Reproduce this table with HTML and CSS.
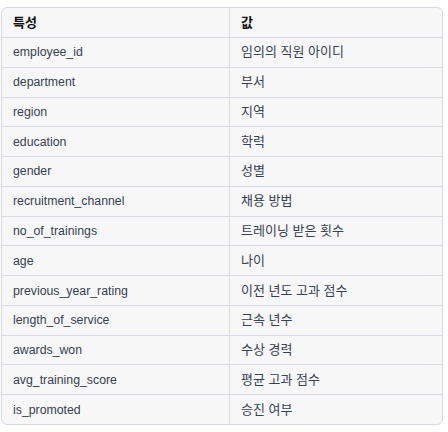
FILE: index.html
```html
<!DOCTYPE html>
<html lang="ko">
<head>
<meta charset="utf-8">
<link rel="stylesheet" href="styles.css">
</head>
<body>
<div class="wrap">
<table class="tbl">
<thead>
<tr><th class="c1">특성</th><th class="c2">값</th></tr>
</thead>
<tbody>
<tr><td>employee_id</td><td>임의의 직원 아이디</td></tr>
<tr><td>department</td><td>부서</td></tr>
<tr><td>region</td><td>지역</td></tr>
<tr><td>education</td><td>학력</td></tr>
<tr><td>gender</td><td>성별</td></tr>
<tr><td>recruitment_channel</td><td>채용 방법</td></tr>
<tr><td>no_of_trainings</td><td>트레이닝 받은 횟수</td></tr>
<tr><td>age</td><td>나이</td></tr>
<tr><td>previous_year_rating</td><td>이전 년도 고과 점수</td></tr>
<tr><td>length_of_service</td><td>근속 년수</td></tr>
<tr><td>awards_won</td><td>수상 경력</td></tr>
<tr><td>avg_training_score</td><td>평균 고과 점수</td></tr>
<tr><td>is_promoted</td><td>승진 여부</td></tr>
</tbody>
</table>
</div>
</body>
</html>
```
FILE: styles.css
```css
html, body {
  margin: 0;
  padding: 0;
  background: #ffffff;
}
.wrap {
  padding: 7px 5px 0 1px;
}
.tbl {
  width: 442px;
  border-collapse: separate;
  border-spacing: 0;
  background: #f7f7f8;
  border: 1px solid #d9d9e3;
  border-radius: 6px;
  font-family: "Liberation Sans", "Noto Sans CJK KR", sans-serif;
  font-size: 13px;
  color: #374151;
  table-layout: fixed;
}
.tbl th, .tbl td {
  height: 28.77px;
  padding: 0 11px;
  text-align: left;
  vertical-align: middle;
  border-top: 1px solid #d9d9e3;
  line-height: 16px;
  white-space: nowrap;
}
.tbl th {
  border-top: none;
  height: 29px;
  font-weight: bold;
  color: #111111;
}
.tbl td:first-child, .tbl th:first-child {
  border-right: 1px solid #d9d9e3;
}
.tbl td:first-child {
  font-size: 12.3px;
}
.c1 { width: 205px; }
.c2 { width: auto; }
```
